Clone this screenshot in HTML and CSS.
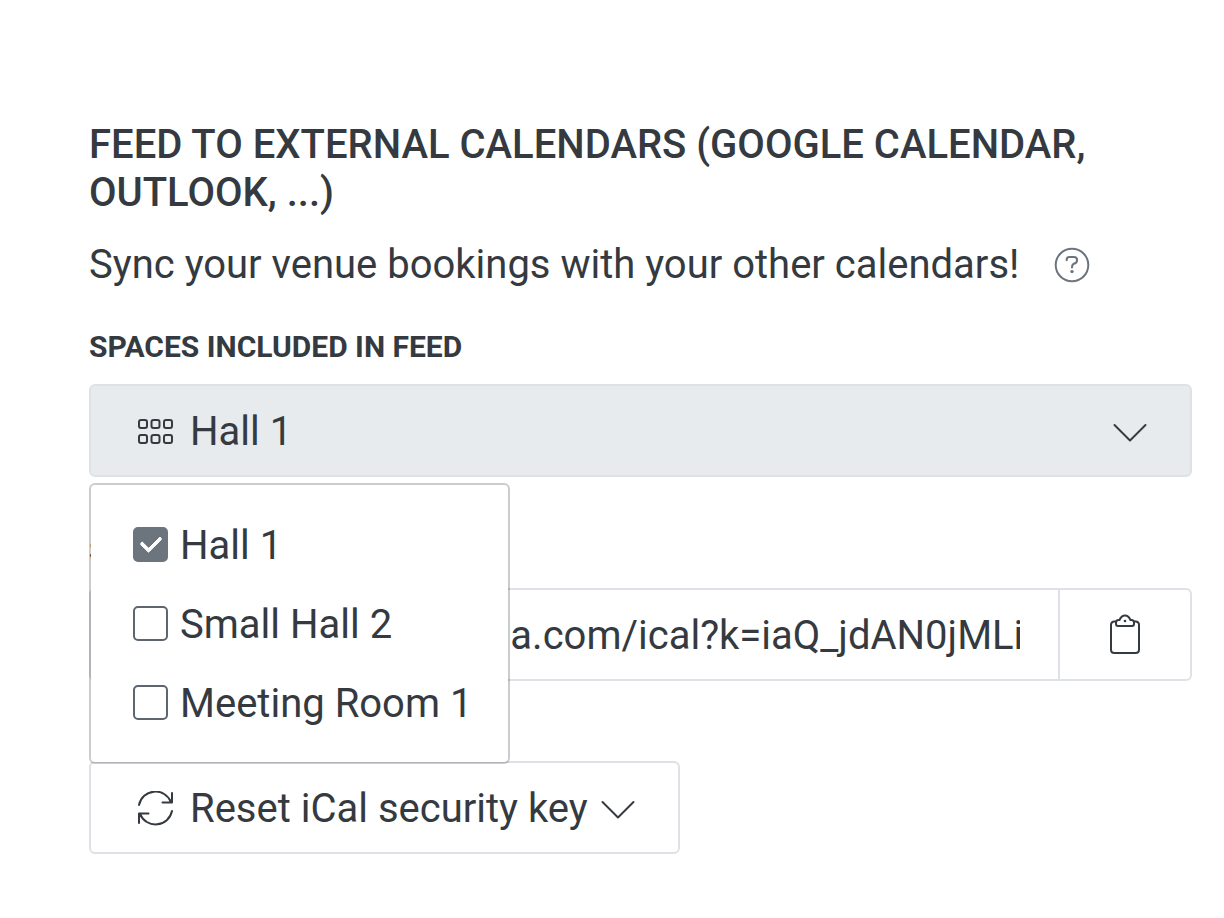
FILE: index.html
```html
<!DOCTYPE html>
<html lang="en">
<head>
<meta charset="utf-8">
<meta name="viewport" content="width=device-width, initial-scale=1">
<title>Calendar feed</title>
<link rel="stylesheet" href="styles.css">
</head>
<body>
<main class="feed">
  <h1 class="feed-title">Feed to external calendars (Google Calendar, Outlook, ...)</h1>
  <div class="intro">
    <p class="intro-text">Sync your venue bookings with your other calendars!</p>
    <button class="help" type="button" aria-label="Help">
      <svg class="icon" viewBox="0 0 36 36"><circle cx="18" cy="18" r="16.3"/><path d="M12.7 13.2V12.4Q12.7 9.9 15.3 9.9H19.8Q23.1 9.9 23.1 13.1T19.8 16.8Q18 17.5 18 20.6"/><circle class="dot" cx="18" cy="24.6" r="1.7"/></svg>
    </button>
  </div>

  <section class="field">
    <h2 class="label" id="spaces-label">Spaces included in feed</h2>
    <div class="dropdown">
      <button class="control toggle" type="button" aria-expanded="true" aria-labelledby="spaces-label spaces-value">
        <svg class="icon" viewBox="0 0 36 36"><rect x="2" y="6" width="8" height="8" rx="2"/><rect x="14.5" y="6" width="8" height="8" rx="2"/><rect x="27" y="6" width="8" height="8" rx="2"/><rect x="2" y="21" width="8" height="8" rx="2"/><rect x="14.5" y="21" width="8" height="8" rx="2"/><rect x="27" y="21" width="8" height="8" rx="2"/></svg>
        <span class="toggle-text" id="spaces-value">Hall 1</span>
        <svg class="icon" viewBox="0 0 36 36"><path d="M2.5 11 18 26.5 33.5 11"/></svg>
      </button>
      <div class="menu" role="group" aria-labelledby="spaces-label">
        <label class="option"><input class="check" type="checkbox" checked>Hall 1</label>
        <label class="option"><input class="check" type="checkbox">Small Hall 2</label>
        <label class="option"><input class="check" type="checkbox">Meeting Room 1</label>
      </div>
    </div>
  </section>

  <section class="field link-field">
    <label class="label" for="feed-link">Secret iCal link</label>
    <div class="input-group">
      <input class="link-input" id="feed-link" type="text" readonly value="https://www.venuerda.com/ical?k=iaQ_jdAN0jMLiR7c2">
      <button class="copy" type="button" aria-label="Copy link">
        <svg class="icon copy-icon" viewBox="0 0 36 42"><path d="M9 7.5H7.5Q4 7.5 4 11V35.5Q4 39 7.5 39H28.5Q32 39 32 35.5V11Q32 7.5 28.5 7.5H27"/><path d="M9 10V8.5Q9 6 11.5 6H12.5Q14.5 1.5 18 1.5T23.5 6H24.5Q27 6 27 8.5V10Q27 12 25 12H11Q9 12 9 10Z"/><circle class="dot" cx="18" cy="7" r="1.3"/></svg>
      </button>
    </div>
  </section>

  <button class="control reset" type="button">
    <svg class="icon" viewBox="0 0 36 36"><path d="M2 14A16.8 16.8 0 0 1 34 11M35 2V11.5H25.5M35 20A16.8 16.8 0 0 1 3 23M2 32V22.5H11.5"/></svg>
    <span>Reset iCal security key</span>
    <svg class="icon reset-caret" viewBox="0 0 36 36"><path d="M2.5 11 18 26.5 33.5 11"/></svg>
  </button>
</main>
</body>
</html>
```
FILE: styles.css
```css
* {
  box-sizing: border-box;
}

body {
  margin: 0;
  background: #fff;
  color: #343a40;
  font: 400 40px/48px Roboto, "Open Sans", sans-serif;
}

button,
input {
  font: inherit;
  color: inherit;
}

button {
  cursor: pointer;
}

.feed {
  padding: 121px 32px 64px 89px;
}

.feed-title {
  margin: 0 0 24px;
  font-size: 40px;
  font-weight: 500;
  text-transform: uppercase;
}

.intro {
  display: flex;
  align-items: center;
  gap: 35px;
  margin-bottom: 39px;
}

.intro-text {
  margin: 0;
}

.help {
  display: flex;
  padding: 0;
  border: 0;
  background: none;
  color: #6c757d;
}

.icon {
  flex: none;
  width: 36px;
  height: 36px;
  fill: none;
  stroke: currentColor;
  stroke-width: 2;
  stroke-linecap: round;
  stroke-linejoin: round;
}

.dot {
  fill: currentColor;
  stroke: none;
}

.label {
  display: block;
  margin: 0 0 18px;
  font-size: 30px;
  font-weight: 700;
  line-height: 38px;
  text-transform: uppercase;
}

.dropdown {
  position: relative;
}

.control {
  display: flex;
  align-items: center;
  gap: 17px;
  padding: 22px 46px 19px;
  border: 2px solid #dee2e6;
  border-radius: 6px;
  background: #fff;
  text-align: left;
}

.toggle {
  width: 100%;
  padding-right: 42px;
  background: #e7ebee;
}

.toggle-text {
  flex: 1;
}

.menu {
  position: absolute;
  top: 100%;
  left: 0;
  z-index: 1;
  display: grid;
  gap: 31px;
  width: 421px;
  margin-top: 6px;
  padding: 37px 42px 34px;
  border: 2px solid rgba(0, 0, 0, 0.2);
  border-radius: 6px;
  background: #fff;
  background-clip: padding-box;
}

.option {
  display: flex;
  align-items: center;
  gap: 12px;
  white-space: nowrap;
}

.check {
  flex: none;
  width: 35px;
  height: 35px;
  margin: 0 0 4px;
  border: 2px solid #5c6670;
  border-radius: 5px;
  background: #fff;
  appearance: none;
}

.check:checked {
  display: grid;
  place-items: center;
  border-color: #6c757d;
  background: #6c757d;
}

.check:checked::before {
  content: "";
  width: 16px;
  height: 9px;
  margin-bottom: 6px;
  border: solid #fff;
  border-width: 0 0 4px 4px;
  border-radius: 2px;
  transform: rotate(-45deg);
}

.link-field {
  margin-top: 55px;
}

.input-group {
  display: flex;
  border: 2px solid #dee2e6;
  border-radius: 6px;
}

.link-input {
  flex: 1;
  min-width: 0;
  padding: 22px 0 19px;
  margin: 0 38px 0 50px;
  border: 0;
  outline: 0;
  background: #fff;
}

.copy {
  display: flex;
  align-items: center;
  padding: 0 47px;
  border: 0;
  border-left: 2px solid #dee2e6;
  background: none;
}

.copy-icon {
  height: 42px;
}

.reset {
  margin-top: 80px;
  padding-right: 42px;
}

.reset-caret {
  margin-left: -5px;
}
```
